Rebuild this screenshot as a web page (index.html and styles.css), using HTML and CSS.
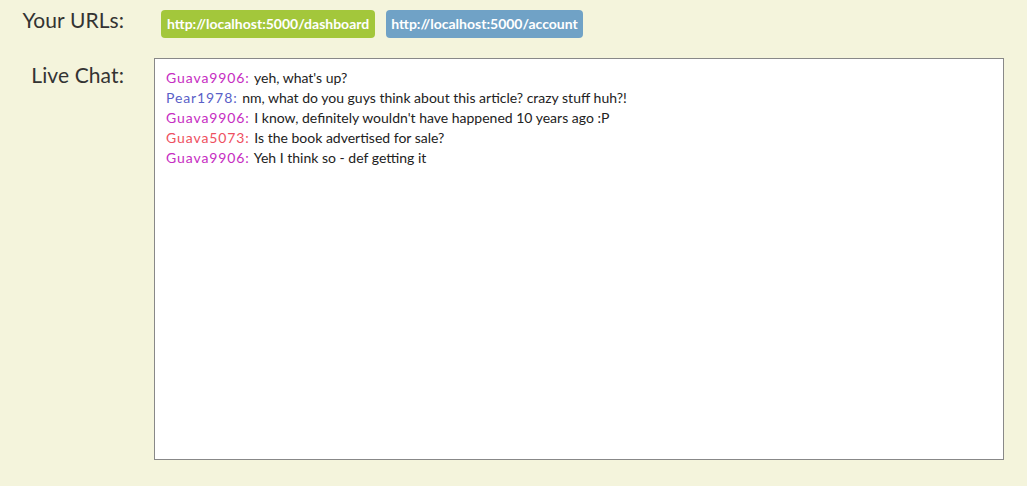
FILE: index.html
```html
<!DOCTYPE html>
<html>
<head>
<meta charset="utf-8">
<link rel="stylesheet" href="styles.css">
</head>
<body>
<div class="page">
  <div class="row row-urls">
    <div class="label">Your URLs:</div>
    <div class="urls">
      <a class="badge badge-green">http://localhost:5000/dashboard</a>
      <a class="badge badge-blue">http://localhost:5000/account</a>
    </div>
  </div>
  <div class="row row-chat">
    <div class="label">Live Chat:</div>
    <div class="chat">
      <div class="msg"><span class="name c-magenta">Guava9906:</span> yeh, what's up?</div>
      <div class="msg"><span class="name c-blue">Pear1978:</span> nm, what do you guys think about this article? crazy stuff huh?!</div>
      <div class="msg"><span class="name c-magenta">Guava9906:</span> I know, definitely wouldn't have happened 10 years ago :P</div>
      <div class="msg"><span class="name c-red">Guava5073:</span> Is the book advertised for sale?</div>
      <div class="msg"><span class="name c-magenta">Guava9906:</span> Yeh I think so - def getting it</div>
    </div>
  </div>
</div>
</body>
</html>
```

FILE: styles.css
```css
html, body {
  margin: 0;
  padding: 0;
  background: #f4f4dc;
  font-family: Lato, "Open Sans", sans-serif;
  color: #333;
}
.page {
  padding-top: 10px;
  display: flex;
  flex-direction: column;
  gap: 20px;
}
.row {
  display: flex;
  align-items: flex-start;
}
.label {
  width: 124px;
  flex: none;
  text-align: right;
  font-size: 21px;
  line-height: 20px;
  letter-spacing: 0.1px;
  color: #333;
}
.row-urls .label {
  padding-top: 0;
}
.row-chat .label {
  padding-top: 7px;
}
.urls {
  margin-left: 37px;
  display: flex;
  gap: 11px;
}
.badge {
  display: block;
  height: 28px;
  line-height: 28px;
  padding: 0 6px;
  border-radius: 4px;
  color: #fff;
  font-weight: bold;
  font-size: 14px;
  text-decoration: none;
}
.badge-green {
  background: #a3c73b;
}
.badge-blue {
  background: #70a2c6;
  padding: 0 5px;
}
.chat {
  margin-left: 30px;
  background: #fff;
  border: 1px solid #888;
  box-sizing: content-box;
  padding: 9px 0 0 11px;
  width: 837px;
  height: 391px;
  font-size: 14px;
  line-height: 20px;
  color: #222;
}
.name {
  letter-spacing: 0.9px;
  margin-right: 1px;
}
.c-magenta { color: #c62cc2; }
.c-blue { color: #5a5fc8; }
.c-red { color: #ee4f60; }
```
